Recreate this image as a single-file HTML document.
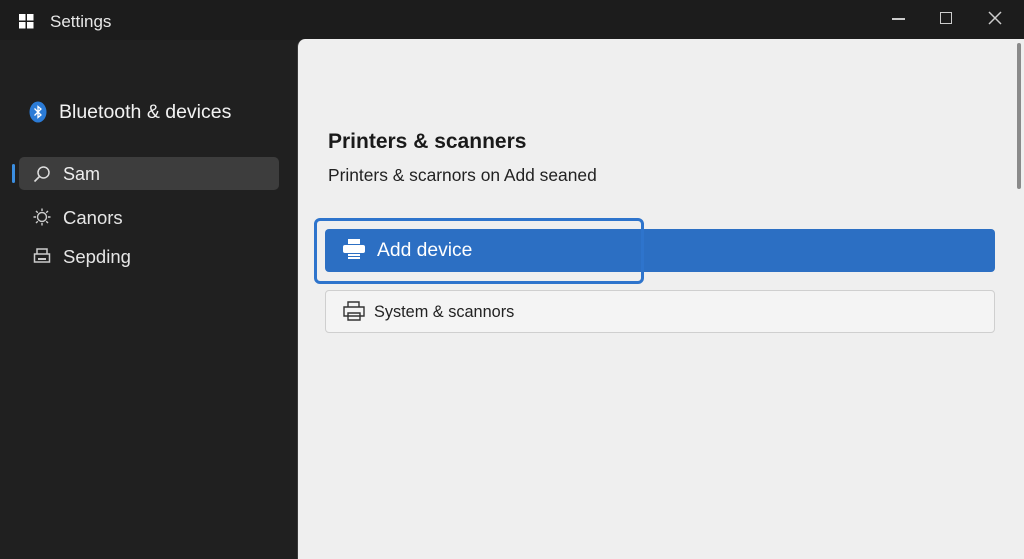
<!DOCTYPE html>
<html><head><style>
*{margin:0;padding:0;box-sizing:border-box}
body{width:1024px;height:559px;background:#202020;font-family:"Liberation Sans",sans-serif;position:relative;overflow:hidden;color:#fff}
.abs{position:absolute}
.panel{left:297px;top:39px;width:727px;height:520px;background:#efefef;border-top-left-radius:8px;border-left:1px solid #3a3a3a}
</style></head><body>
<div class="abs" style="left:0;top:0;width:1024px;height:40px;background:#1c1c1c"></div>
<svg class="abs" style="left:19px;top:14px" width="15" height="15"><rect x="0" y="0" width="6.5" height="6.5" fill="#fff"/><rect x="8" y="0" width="6.5" height="6.5" fill="#fff"/><rect x="0" y="8" width="6.5" height="6.5" fill="#fff"/><rect x="8" y="8" width="6.5" height="6.5" fill="#fff"/></svg>
<div class="abs" style="left:50px;top:12px;font-size:17px;color:#e8e8e8">Settings</div>
<div class="abs" style="left:892px;top:18px;width:13px;height:1.5px;background:#ccc"></div>
<div class="abs" style="left:940px;top:12px;width:12px;height:12px;border:1.5px solid #ccc"></div>
<svg class="abs" style="left:988px;top:11px" width="14" height="14"><path d="M1 1L13 13M13 1L1 13" stroke="#ccc" stroke-width="1.5"/></svg>
<svg class="abs" style="left:29px;top:101px" width="18" height="22"><ellipse cx="9" cy="11" rx="8.5" ry="10.5" fill="#2b7bd6"/><path d="M5.5 7.5L12 14L9 16.5V5.5L12 8L5.5 14.5" stroke="#fff" stroke-width="1.3" fill="none"/></svg>
<div class="abs" style="left:59px;top:101px;font-size:19.5px;color:#f2f2f2">Bluetooth &amp; devices</div>
<div class="abs" style="left:12px;top:164px;width:3px;height:19px;background:#3b8ee0;border-radius:2px"></div>
<div class="abs" style="left:19px;top:157px;width:260px;height:33px;background:#3d3d3d;border-radius:5px"></div>
<svg class="abs" style="left:33px;top:165px" width="18" height="18"><circle cx="10.5" cy="7.5" r="5.5" stroke="#ddd" stroke-width="1.5" fill="none"/><path d="M6.5 11.5L1.5 16.5" stroke="#ddd" stroke-width="1.6"/></svg>
<div class="abs" style="left:63px;top:164px;font-size:18px;color:#eee">Sam</div>
<svg class="abs" style="left:33px;top:208px" width="18" height="18"><circle cx="9" cy="9" r="4.5" stroke="#ccc" stroke-width="1.4" fill="none"/><path d="M9 0.5V3M9 15V17.5M0.5 9H3M15 9H17.5M3 3L4.8 4.8M13.2 13.2L15 15M3 15L4.8 13.2M13.2 4.8L15 3" stroke="#ccc" stroke-width="1.4"/></svg>
<div class="abs" style="left:63px;top:207px;font-size:18.5px;color:#e6e6e6">Canors</div>
<svg class="abs" style="left:33px;top:247px" width="18" height="18"><path d="M4 7V2H14V7M1.5 7H16.5V15H1.5Z" stroke="#ccc" stroke-width="1.5" fill="none"/><rect x="5" y="11" width="8" height="2" fill="#ccc"/></svg>
<div class="abs" style="left:63px;top:246px;font-size:18.5px;color:#e6e6e6">Sepding</div>
<div class="abs panel"></div>
<div class="abs" style="left:1017px;top:43px;width:4px;height:146px;background:#8a8a8a;border-radius:2px"></div>
<div class="abs" style="left:328px;top:130px;font-size:21px;font-weight:bold;color:#1a1a1a">Printers &amp; scanners</div>
<div class="abs" style="left:328px;top:165px;font-size:17.4px;color:#222">Printers &amp; scarnors on Add seaned</div>
<div class="abs" style="left:325px;top:229px;width:670px;height:43px;background:#2c6fc3;border-radius:4px"></div>
<div class="abs" style="left:314px;top:218px;width:330px;height:66px;border:3px solid #2e74cc;border-radius:6px"></div>
<svg class="abs" style="left:343px;top:239px" width="22" height="20"><rect x="5" y="0" width="12" height="5" fill="#fff"/><rect x="0" y="6" width="22" height="8" rx="2" fill="#fff"/><rect x="5" y="15" width="12" height="2" fill="#fff"/><rect x="5" y="18" width="12" height="2" fill="#fff"/></svg>
<div class="abs" style="left:377px;top:240px;font-size:19.3px;color:#fff">Add device</div>
<div class="abs" style="left:325px;top:290px;width:670px;height:43px;background:#f4f4f4;border:1px solid #cfcfcf;border-radius:4px"></div>
<svg class="abs" style="left:343px;top:301px" width="22" height="20"><path d="M5 6V1H16V6M1 6H21V15H1ZM5 12H17V19H5Z" stroke="#333" stroke-width="1.4" fill="none"/></svg>
<div class="abs" style="left:374px;top:303px;font-size:16.3px;color:#222">System &amp; scannors</div>
</body></html>
